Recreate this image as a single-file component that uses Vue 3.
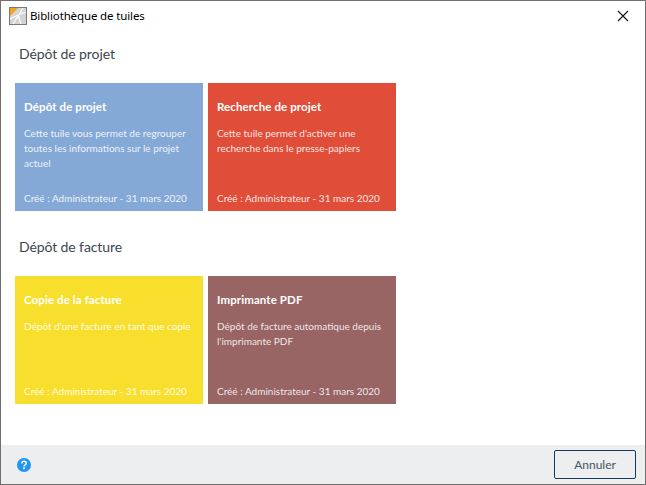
<script setup>
const groups = [
  { title: 'Dépôt de projet', tiles: [
    { name: 'Dépôt de projet', text: 'Cette tuile vous permet de regrouper toutes les informations sur le projet actuel', color: '#85a9d7' },
    { name: 'Recherche de projet', text: "Cette tuile permet d'activer une recherche dans le presse-papiers", color: '#e04e39' },
  ]},
  { title: 'Dépôt de facture', tiles: [
    { name: 'Copie de la facture', text: "Dépôt d'une facture en tant que copie", color: '#f8df2e' },
    { name: 'Imprimante PDF', text: "Dépôt de facture automatique depuis l'imprimante PDF", color: '#996464' },
  ]},
]
</script>

<template>
  <div class="window">
    <header class="titlebar">
      <svg class="appicon" width="18" height="18" viewBox="0 0 18 18">
        <rect x="0.5" y="0.5" width="17" height="17" fill="#d4d4d4" stroke="#777"/>
        <path d="M1 1h8L1 9z" fill="#f4a11d"/>
        <path d="M4 17L14 1M9 8l8-3M9 8l3 9M9 8L1 12" stroke="#fff" stroke-width="1.2" fill="none"/>
      </svg>
      <span class="wintitle">Bibliothèque de tuiles</span>
      <svg class="close" width="12" height="12" viewBox="0 0 12 12">
        <path d="M1 1l10 10M11 1L1 11" stroke="#111" stroke-width="1.1" fill="none"/>
      </svg>
    </header>
    <main class="content">
      <section v-for="g in groups" :key="g.title" class="group">
        <h2>{{ g.title }}</h2>
        <div class="tiles">
          <article v-for="t in g.tiles" :key="t.name" class="tile" :style="{ background: t.color }">
            <h3>{{ t.name }}</h3>
            <p>{{ t.text }}</p>
            <footer>Créé : Administrateur - 31 mars 2020</footer>
          </article>
        </div>
      </section>
    </main>
    <footer class="bottom">
      <svg width="14" height="14" viewBox="0 0 14 14">
        <circle cx="7" cy="7" r="7" fill="#2196f3"/>
        <path d="M4.9 5.4c0-1.3 1-2.1 2.2-2.1s2.1.8 2.1 1.9c0 1.7-2.1 1.6-2.1 3.2" fill="none" stroke="#fff" stroke-width="1.6"/>
        <rect x="6.2" y="9.4" width="1.7" height="1.7" fill="#fff"/>
      </svg>
      <button class="cancel">Annuler</button>
    </footer>
  </div>
</template>

<style scoped>
.window {
  box-sizing: border-box;
  width: 646px;
  height: 485px;
  border: 1px solid #6f6f6f;
  display: flex;
  flex-direction: column;
  background: #fff;
  font-family: "Noto Sans", sans-serif;
}
.titlebar {
  height: 29px;
  display: flex;
  align-items: center;
  padding: 0 16px 0 8px;
  flex: none;
}
.appicon { margin-right: 3px; }
.wintitle { font-size: 11.5px; color: #000; letter-spacing: -0.13px; }
.close { margin-left: auto; }
.content {
  flex: 1;
  padding: 0 14px;
}
.group { height: 193px; }
.group h2 {
  margin: 0;
  padding: 14px 0 0 4px;
  height: 39px;
  font-size: 14px;
  line-height: 20px;
  font-weight: 400;
  color: #3c4650;
  font-family: Lato, sans-serif;
  letter-spacing: -0.1px;
}
.tiles { display: flex; gap: 5px; }
.tile {
  box-sizing: border-box;
  width: 188px;
  height: 128px;
  padding: 16px 9px 0;
  color: #fff;
  display: flex;
  flex-direction: column;
  font-family: Lato, sans-serif;
}
.tile h3 { margin: 0; font-size: 11.5px; line-height: 16px; font-weight: 700; letter-spacing: 0.1px; }
.tile p { margin: 11px 0 0; font-size: 10px; line-height: 15px; color: rgba(255, 255, 255, 0.88); }
.tile footer { margin-top: auto; padding-bottom: 5px; font-size: 10px; line-height: 15px; white-space: nowrap; color: rgba(255, 255, 255, 0.88); }
.bottom {
  height: 39px;
  flex: none;
  margin-top: auto;
  background: #eceef0;
  display: flex;
  align-items: center;
  justify-content: space-between;
  padding: 0 9px 0 16px;
}
.cancel {
  box-sizing: border-box;
  width: 82px;
  height: 29px;
  background: #eceef0;
  border: 1px solid #17395c;
  border-radius: 2px;
  color: #4a5560;
  font-family: Lato, sans-serif;
  font-size: 12px;
  padding: 0;
}
</style>
